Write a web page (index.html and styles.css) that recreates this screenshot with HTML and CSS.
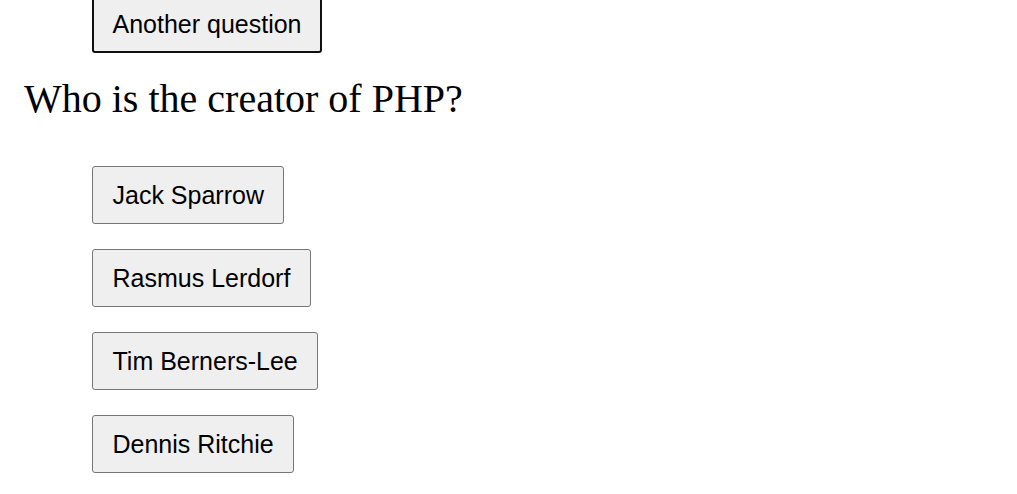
FILE: index.html
```html
<!DOCTYPE html>
<html>
<head>
<meta charset="utf-8">
<link rel="stylesheet" href="styles.css">
</head>
<body>
<div class="page">
  <div class="top">
    <button class="btn btn-focus">Another question</button>
  </div>
  <h1 class="question">Who is the creator of PHP?</h1>
  <div class="answers">
    <button class="btn">Jack Sparrow</button>
    <button class="btn">Rasmus Lerdorf</button>
    <button class="btn">Tim Berners-Lee</button>
    <button class="btn">Dennis Ritchie</button>
  </div>
</div>
</body>
</html>
```
FILE: styles.css
```css
html, body {
  margin: 0;
  padding: 0;
  background: #fff;
}
.page {
  margin-top: -5px;
  padding-left: 24px;
}
.top {
  padding-left: 68px;
}
.btn {
  font-family: "Liberation Sans", Arial, sans-serif;
  font-size: 25px;
  line-height: 28px;
  color: #000;
  background: #efefef;
  border: 1px solid #767676;
  border-radius: 3px;
  padding: 14px 19.5px;
  margin: 0;
  cursor: pointer;
}
.btn-focus {
  border: 2px solid #101010;
  padding: 13px 18.5px;
}
.question {
  font-family: "Liberation Serif", "Times New Roman", serif;
  font-weight: normal;
  font-size: 40px;
  line-height: 46px;
  margin: 23px 0 44px 0;
  color: #000;
}
.answers {
  display: flex;
  flex-direction: column;
  align-items: flex-start;
  gap: 25px;
  padding-left: 68px;
}
```
